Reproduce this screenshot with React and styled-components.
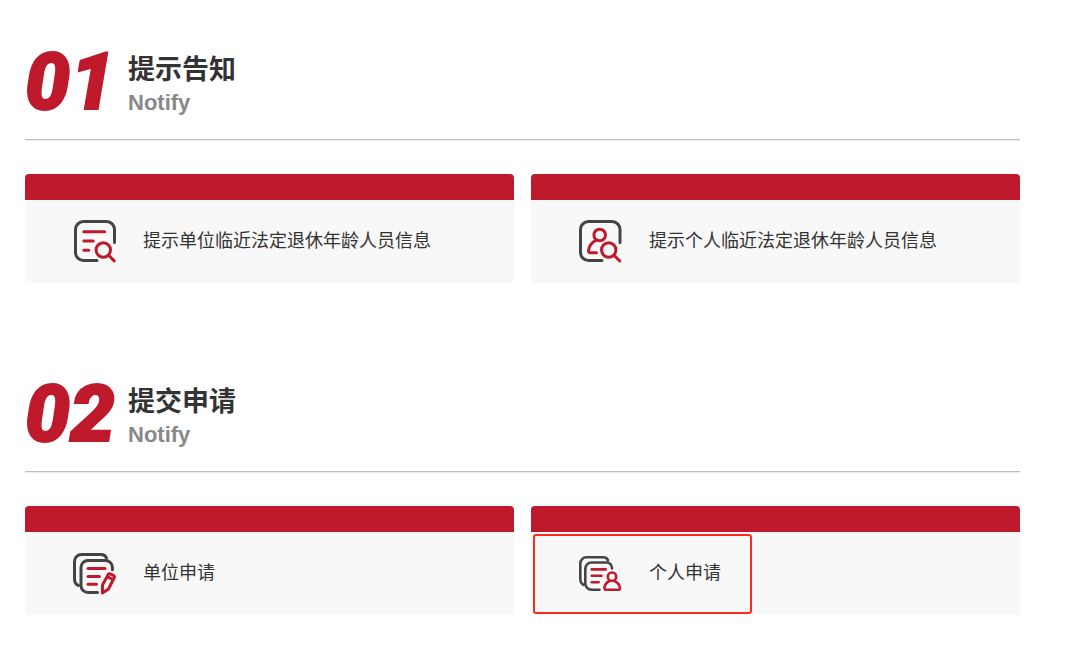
import React from 'react';
import styled, { createGlobalStyle } from 'styled-components';

const GlobalStyle = createGlobalStyle`
  * {
    box-sizing: border-box;
  }

  body {
    margin: 0;
    background: #fff;
    color: #333;
    font-family: 'Liberation Sans', 'Noto Sans CJK SC', sans-serif;
  }
`;

const Page = styled.main`
  display: flex;
  flex-direction: column;
  gap: 101px;
  padding: 52px 60px 52px 25px;
`;

const SectionHead = styled.header`
  display: flex;
  align-items: flex-start;
  gap: 16px;
  padding-bottom: 21px;
  border-bottom: 1px solid #c0c0c0;
  box-shadow: 0 1px 0 #ececec;
`;

const StepNumber = styled.span`
  width: 87px;
  color: #be1a2b;
  font-family: Roboto, 'Liberation Sans', sans-serif;
  font-size: 80px;
  font-style: italic;
  font-weight: 900;
  line-height: 60px;
  -webkit-text-stroke: 2px #be1a2b;
`;

const Title = styled.h2`
  margin: 0;
  color: #333;
  font-size: 27px;
  font-weight: 700;
  line-height: 36px;
`;

const Subtitle = styled.p`
  margin: 0;
  color: #888;
  font-size: 22px;
  font-weight: 700;
  line-height: 30px;
`;

const CardGrid = styled.div`
  display: grid;
  grid-template-columns: 1fr 1fr;
  gap: 17px;
  margin-top: 34px;
`;

const Card = styled.a`
  display: block;
  overflow: hidden;
  border-top: 26px solid #be1a2b;
  border-radius: 4px;
  background: #f8f8f8;
  color: #333;
  text-decoration: none;
`;

const CardBody = styled.div`
  position: relative;
  display: flex;
  align-items: center;
  gap: 26px;
  padding: 19px 48px 20px;
`;

const CardLabel = styled.span`
  font-size: 18px;
  line-height: 28px;
`;

const Highlight = styled.span`
  position: absolute;
  top: 2px;
  left: 2px;
  width: 219px;
  height: 80px;
  border: 2px solid #ff2a1c;
  border-radius: 3px;
  pointer-events: none;
`;

const IconSvg = styled.svg`
  flex: none;
  width: 44px;
  height: 44px;
  fill: none;
  stroke-width: ${({ $thin }) => ($thin ? 2.6 : 3)};
  stroke-linecap: round;
  stroke-linejoin: round;

  .frame {
    stroke: #444;
  }

  .accent {
    stroke: #be1a2b;
  }
`;

const ListSearchIcon = () => (
  <IconSvg viewBox="0 0 44 44" aria-hidden="true">
    <path className="frame" d="M41.5 23.5V10.5a8 8 0 0 0-8-8h-23a8 8 0 0 0-8 8v23a8 8 0 0 0 8 8H24" />
    <path className="accent" d="M10.8 12.7h20.8M10.8 22h9.4M10.8 31.3h5" />
    <circle className="accent" cx="30.3" cy="31" r="7.2" />
    <path className="accent" d="M35.6 36.3l5.6 5.6" />
  </IconSvg>
);

const PersonSearchIcon = () => (
  <IconSvg viewBox="0 0 44 44" aria-hidden="true">
    <path className="frame" d="M41 23.5V10.5a8 8 0 0 0-8-8H9.5a8 8 0 0 0-8 8v23a8 8 0 0 0 8 8H23" />
    <circle className="accent" cx="20.7" cy="16" r="5.8" />
    <path className="accent" d="M16.8 21.5C12.5 23.5 10.3 27 9.6 31.2C9.3 33 9.9 33.8 11.5 33.8H17.5" />
    <circle className="accent" cx="29.7" cy="31" r="7.2" />
    <path className="accent" d="M35 36.3l5.7 5.6" />
  </IconSvg>
);

const DocsEditIcon = () => (
  <IconSvg viewBox="0 0 44 44" aria-hidden="true">
    <path className="frame" d="M33.5 7C32.5 4.5 31 3.5 28 3.5H8.5a7 7 0 0 0-7 7V28C1.5 31 3 33.5 5.5 34.5" />
    <path className="frame" d="M39.4 18.8V16.5a7 7 0 0 0-7-7H15a7 7 0 0 0-7 7v18a7 7 0 0 0 7 7h9.5" />
    <path className="accent" d="M15 17.5h17M15 25.4h11.5M15 33.3h8.5" />
    <path className="accent" d="M29.5 34L35.3 23.4Q36 22.3 37.2 22.9L40.7 24.7Q41.9 25.4 41.3 26.5L35.5 38L29.4 42Z" />
    <path className="accent" d="M34.6 25.8L39.8 28.5" />
  </IconSvg>
);

const DocsPersonIcon = () => (
  <IconSvg viewBox="0 0 44 44" $thin aria-hidden="true">
    <path className="frame" d="M29 9.5C28.3 7.3 26.5 6.3 24 6.3H7.5a6.2 6.2 0 0 0-6.2 6.2V28C1.3 30.8 2.5 33 4.8 34" />
    <path className="frame" d="M33 17.5V17a5.5 5.5 0 0 0-5.5-5.5H12.5a6.2 6.2 0 0 0-6.2 6.2V32.5a6.2 6.2 0 0 0 6.2 6.2H20.5" />
    <path className="accent" d="M12.7 18.4h14M12.7 24.8h9.8M12.7 31.3h7" />
    <circle className="accent" cx="33" cy="25.7" r="4.2" />
    <path className="accent" d="M30.5 30C27.5 31.3 25.7 34 25.4 37C25.3 38.2 25.9 38.7 27 38.7H39.5C40.6 38.7 41.2 38.2 41 37C40.6 34 38.5 31.3 35.5 30" />
  </IconSvg>
);

const sections = [
  {
    number: '01',
    title: '提示告知',
    subtitle: 'Notify',
    cards: [
      { label: '提示单位临近法定退休年龄人员信息', Icon: ListSearchIcon },
      { label: '提示个人临近法定退休年龄人员信息', Icon: PersonSearchIcon },
    ],
  },
  {
    number: '02',
    title: '提交申请',
    subtitle: 'Notify',
    cards: [
      { label: '单位申请', Icon: DocsEditIcon },
      { label: '个人申请', Icon: DocsPersonIcon, highlighted: true },
    ],
  },
];

const App = () => {
  return (
    <>
      <GlobalStyle />
      <Page lang="zh-CN">
        {sections.map(({ number, title, subtitle, cards }) => (
          <section key={number}>
            <SectionHead>
              <StepNumber>{number}</StepNumber>
              <div>
                <Title>{title}</Title>
                <Subtitle>{subtitle}</Subtitle>
              </div>
            </SectionHead>
            <CardGrid>
              {cards.map(({ label, Icon, highlighted }) => (
                <Card key={label} href="#">
                  <CardBody>
                    <Icon />
                    <CardLabel>{label}</CardLabel>
                    {highlighted && <Highlight />}
                  </CardBody>
                </Card>
              ))}
            </CardGrid>
          </section>
        ))}
      </Page>
    </>
  );
};

export default App;
